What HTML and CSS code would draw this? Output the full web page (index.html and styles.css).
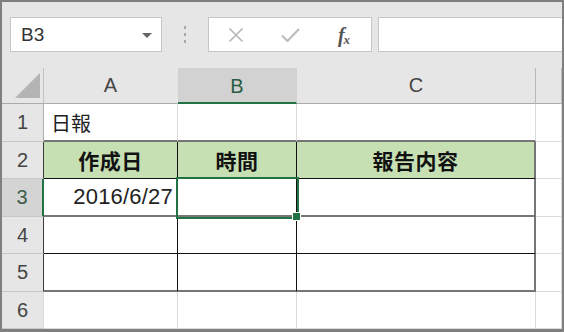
FILE: index.html
```html
<!DOCTYPE html>
<html lang="ja">
<head>
<meta charset="utf-8">
<title>日報</title>
<link rel="stylesheet" href="styles.css">
</head>
<body>
<div class="frame">
  <div class="toolbar">
    <div class="namebox"><span class="ref">B3</span><span class="caret"></span></div>
    <div class="grip"><i></i><i></i><i></i></div>
    <div class="fbuttons">
      <svg class="ico" width="16" height="16" viewBox="0 0 16 16"><path d="M1.5 1.5L14.5 14.5M14.5 1.5L1.5 14.5" stroke="#b5b5b5" stroke-width="1.6" fill="none"/></svg>
      <svg class="ico" width="19" height="14" viewBox="0 0 19 14"><path d="M1 7.5L6.5 13L18 1" fill="none" stroke="#bdbdbd" stroke-width="2.2"/></svg>
      <span class="fx"><span class="f">f</span><span class="x">x</span></span>
    </div>
    <div class="finput"></div>
  </div>
  <div class="sheet">
    <!-- header row -->
    <div class="c corner"><div class="tri"></div></div>
    <div class="c ch">A</div>
    <div class="c ch sel">B</div>
    <div class="c ch">C</div>
    <div class="c ch last"></div>
    <!-- row 1 -->
    <div class="c rh">1</div>
    <div class="c jp title b-top">日報</div>
    <div class="c b-top"></div>
    <div class="c b-top"></div>
    <div class="c"></div>
    <!-- row 2 -->
    <div class="c rh dark">2</div>
    <div class="c jp hd in-r b-blk">作成日</div>
    <div class="c jp hd in-r b-blk">時間</div>
    <div class="c jp hd out-r b-blk">報告内容</div>
    <div class="c"></div>
    <!-- row 3 -->
    <div class="c rh sel">3</div>
    <div class="c date in-r b-gray">2016/6/27</div>
    <div class="c in-r b-gray"></div>
    <div class="c out-r b-gray"></div>
    <div class="c"></div>
    <!-- row 4 -->
    <div class="c rh dark">4</div>
    <div class="c in-r b-blk"></div>
    <div class="c in-r b-blk"></div>
    <div class="c out-r b-blk"></div>
    <div class="c"></div>
    <!-- row 5 -->
    <div class="c rh dark">5</div>
    <div class="c in-r b-gray"></div>
    <div class="c in-r b-gray"></div>
    <div class="c out-r b-gray"></div>
    <div class="c"></div>
    <!-- row 6 -->
    <div class="c rh light">6</div>
    <div class="c"></div>
    <div class="c"></div>
    <div class="c"></div>
    <div class="c"></div>

    <div class="selection"><span class="handle"></span></div>
  </div>
</div>
</body>
</html>
```

FILE: styles.css
```css
html, body {
  margin: 0;
  padding: 0;
}
body {
  width: 564px;
  height: 332px;
  overflow: hidden;
  background: #ffffff;
}
.frame {
  box-sizing: border-box;
  width: 564px;
  height: 332px;
  border: 2px solid #7f7f7f;
  border-bottom-width: 3px;
  background: #e6e6e6;
  font-family: "Liberation Sans", "Noto Sans CJK JP", sans-serif;
  display: flex;
  flex-direction: column;
  overflow: hidden;
}

/* ---------- toolbar ---------- */
.toolbar {
  box-sizing: border-box;
  height: 66px;
  display: flex;
  align-items: flex-start;
  padding: 15px 0 0 8px;
}
.namebox {
  box-sizing: border-box;
  width: 152px;
  height: 35px;
  background: #ffffff;
  border: 1px solid #c6c6c6;
  display: flex;
  align-items: center;
  justify-content: space-between;
  padding: 0 9px 0 10px;
}
.ref {
  font-size: 19px;
  color: #333333;
}
.caret {
  width: 0;
  height: 0;
  border-left: 5px solid transparent;
  border-right: 5px solid transparent;
  border-top: 5px solid #666666;
  margin-top: 1px;
}
.grip {
  width: 46px;
  height: 35px;
  display: flex;
  flex-direction: column;
  align-items: center;
  justify-content: center;
  gap: 4px;
}
.grip i {
  display: block;
  width: 2px;
  height: 3px;
  background: #a8a8a8;
}
.fbuttons {
  box-sizing: border-box;
  width: 164px;
  height: 35px;
  background: #ffffff;
  border: 1px solid #c6c6c6;
  display: grid;
  grid-template-columns: repeat(3, 1fr);
  align-items: center;
  justify-items: center;
}
.ico {
  display: block;
}
.fx {
  font-family: "Liberation Serif", serif;
  font-style: italic;
  font-weight: bold;
  color: #555555;
  display: flex;
  align-items: baseline;
  line-height: 1;
}
.fx .f {
  font-size: 20px;
}
.fx .x {
  font-size: 13px;
  position: relative;
  top: 2px;
  margin-left: -1px;
}
.finput {
  box-sizing: border-box;
  flex: 1;
  height: 35px;
  margin-left: 6px;
  background: #ffffff;
  border: 1px solid #c6c6c6;
  border-right: none;
}

/* ---------- sheet ---------- */
.sheet {
  position: relative;
  display: grid;
  grid-template-columns: 42px 134px 119px 239px 26px;
  grid-template-rows: 36px 38px 37px 38px 37px 38px 37px;
  background: #ffffff;
}
.c {
  box-sizing: border-box;
  min-width: 0;
  overflow: hidden;
  display: flex;
  align-items: center;
  border-right: 1px solid #dadada;
  border-bottom: 1px solid #dadada;
  white-space: nowrap;
  color: #1a1a1a;
}
.corner {
  background: #e6e6e6;
  border-right-color: #c2c2c2;
  border-bottom-color: #ababab;
  justify-content: flex-end;
  align-items: flex-end;
  padding: 0 3px 5px 0;
}
.tri {
  width: 25px;
  height: 25px;
  background: #b4b4b4;
  clip-path: polygon(100% 0, 100% 100%, 0 100%);
}
.ch {
  background: #e6e6e6;
  border-right-color: #e6e6e6;
  border-bottom-color: #ababab;
  justify-content: center;
  font-size: 20px;
  color: #444444;
}
.ch.sel {
  background: #d2d2d2;
  border-right-color: #d2d2d2;
  border-bottom: 2px solid #217346;
  color: #2b5d40;
  padding-top: 2px;
}
.ch.last {
  border-right-color: #bdbdbd;
}
.sheet > .ch:nth-child(4) {
  border-right-color: #b8b8b8;
}
.rh {
  background: #e6e6e6;
  justify-content: center;
  font-size: 20px;
  color: #444444;
  border-bottom-color: #c8c8c8;
  border-right-color: #b0b0b0;
}
.rh.dark {
  border-right-color: #3c3c3c;
}
.rh.light {
  border-right-color: #dcdcdc;
}
.rh.sel {
  background: #d4d4d4;
  border-right: 2px solid #217346;
  color: #3d5d4a;
}

.jp {
  font-family: "Noto Sans CJK JP", sans-serif;
}
.title {
  font-size: 20px;
  padding-left: 7px;
  color: #222222;
}
.hd {
  background: #c6e0b4;
  font-weight: bold;
  font-size: 21px;
  letter-spacing: 0.5px;
  justify-content: center;
  color: #111111;
}
.date {
  justify-content: flex-end;
  padding-right: 4px;
  font-size: 22px;
  letter-spacing: 0.2px;
  color: #222222;
}
.b-top {
  border-bottom: 2px solid #767676;
}
.in-r {
  border-right: 1px solid #111111;
}
.out-r {
  border-right: 2px solid #767676;
}
.b-blk {
  border-bottom: 1px solid #111111;
}
.b-gray {
  border-bottom: 2px solid #767676;
}

/* selection overlay */
.selection {
  position: absolute;
  left: 174px;
  top: 109px;
  width: 123px;
  height: 42px;
  box-sizing: border-box;
  border: 2px solid #217346;
  pointer-events: none;
}
.handle {
  position: absolute;
  right: -3px;
  bottom: -3px;
  width: 7px;
  height: 7px;
  background: #217346;
  box-shadow: 0 0 0 1px #ffffff;
}
```
